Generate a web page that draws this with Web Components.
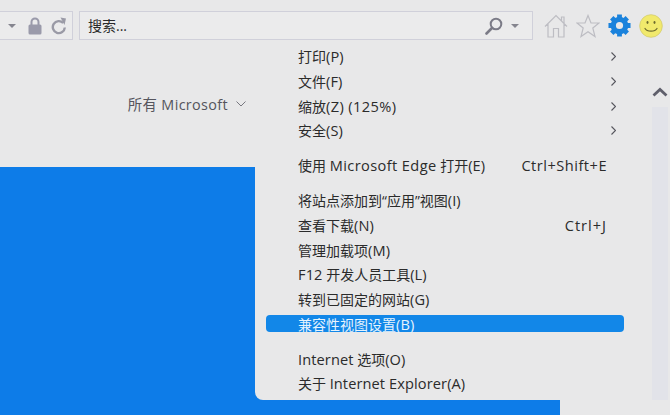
<!DOCTYPE html>
<html lang="zh-CN">
<head>
<meta charset="utf-8">
<title>Internet Explorer</title>
<style>
    html, body {
        margin: 0;
        height: 100%;
        overflow: hidden;
        background: #e8e8e9;
        font-family: "Open Sans", "Noto Sans CJK SC", sans-serif;
        font-size: 14px;
    }
    /* latin runs are a bit bigger than the cjk ones in the menu */
    .l { font-size: 14.6px; letter-spacing: 0.1px; }
    .w { font-size: 14.6px; letter-spacing: 0.4px; }
</style>
</head>
<body>
<ie-window>
    <ie-toolbar></ie-toolbar>
    <ms-page></ms-page>
    <ie-menu>
        <ie-menu-item sub>打印<span class="l">(P)</span></ie-menu-item>
        <ie-menu-item sub>文件<span class="l">(F)</span></ie-menu-item>
        <ie-menu-item sub>缩放<span class="w">(Z) (125%)</span></ie-menu-item>
        <ie-menu-item sub>安全<span class="l">(S)</span></ie-menu-item>
        <ie-menu-item group shortcut="Ctrl+Shift+E" style="--key-gap:.5px">使用 <span class="w">Microsoft Edge</span> 打开<span class="l">(E)</span></ie-menu-item>
        <ie-menu-item group>将站点添加到“应用”视图<span class="l">(I)</span></ie-menu-item>
        <ie-menu-item shortcut="Ctrl+J" style="--key-gap:1px">查看下载<span class="l">(N)</span></ie-menu-item>
        <ie-menu-item>管理加载项<span class="l">(M)</span></ie-menu-item>
        <ie-menu-item><span class="l">F12</span> 开发人员工具<span class="l">(L)</span></ie-menu-item>
        <ie-menu-item>转到已固定的网站<span class="l">(G)</span></ie-menu-item>
        <ie-menu-item active>兼容性视图设置<span class="l">(B)</span></ie-menu-item>
        <ie-menu-item group><span class="l">Internet</span> 选项<span class="l">(O)</span></ie-menu-item>
        <ie-menu-item>关于 <span class="l">Internet Explorer(A)</span></ie-menu-item>
    </ie-menu>
</ie-window>

<script>
class IeWindow extends HTMLElement {
    constructor() {
        super();
        this.attachShadow({ mode: 'open' });
    }

    connectedCallback() {
        this.shadowRoot.innerHTML = `
            <style>
                :host {
                    display: flex;
                    flex-direction: column;
                    position: relative;
                    width: 670px;
                    height: 415px;
                    overflow: hidden;
                    background: #e8e8e9;
                }
            </style>
            <slot></slot>
        `;
    }
}

class IeToolbar extends HTMLElement {
    constructor() {
        super();
        this.attachShadow({ mode: 'open' });
    }

    connectedCallback() {
        this.shadowRoot.innerHTML = `
            <style>
                :host {
                    display: flex;
                    align-items: center;
                    flex: none;
                    height: 29px;
                    padding: 11px 8px 6px 0;
                    gap: 6px;
                }
                .address, .search {
                    display: flex;
                    align-items: center;
                    flex: none;
                    box-sizing: border-box;
                    height: 29px;
                    border: 1px solid #d0d0da;
                    background: #ebebec;
                }
                .address {
                    width: 73px;
                    border-left: 0;
                    gap: 12px;
                    padding-left: 8px;
                }
                .address .reload { margin-left: -3px; }
                .search {
                    width: 454px;
                    padding: 0 13px 0 8px;
                    font-size: 14px;
                    color: #2a2a2a;
                }
                .search span { flex: 1; margin-top: -2px; }
                .search .glass { margin-right: 8px; }
                .caret {
                    width: 0;
                    height: 0;
                    border: 4px solid transparent;
                    border-top: 4px solid #85858f;
                    border-bottom: 0;
                    flex: none;
                }
                .tools {
                    display: flex;
                    align-items: center;
                    margin-left: 5px;
                    gap: 8px;
                }
                svg { display: block; flex: none; }
            </style>
            <div class="address">
                <div class="caret"></div>
                <svg width="14" height="18" viewBox="0 0 14 18">
                    <path d="M3.5 8V5a3.5 3.5 0 0 1 7 0v3" fill="none" stroke="#9a9aaa" stroke-width="2"/>
                    <rect x="0.5" y="7.5" width="13" height="10" rx="1.5" fill="#9a9aaa"/>
                </svg>
                <svg class="reload" width="16" height="18" viewBox="0 0 16 18">
                    <path d="M12.2 6a6 6 0 1 0 1.600 4.500" fill="none" stroke="#9a9aa6" stroke-width="2.400"/>
                    <path d="M9.500 0.500L15 1.500L13.500 8Z" fill="#9a9aa6"/>
                </svg>
            </div>
            <div class="search">
                <span>搜索...</span>
                <svg class="glass" width="18" height="18" viewBox="0 0 18 18">
                    <circle cx="11" cy="7" r="5.300" fill="none" stroke="#7b7b87" stroke-width="2"/>
                    <path d="M7 11L1.500 16.500" stroke="#7b7b87" stroke-width="2.600" stroke-linecap="round"/>
                </svg>
                <div class="caret"></div>
            </div>
            <div class="tools">
                <svg width="24" height="24" viewBox="0 0 24 24">
                    <path d="M1 12.500L12 1.500L23 12.500M4 10V23H9.500V14.500H14.500V23H20V10M17.500 6.500V3H20V9" fill="none" stroke="#bdbdc3" stroke-width="1.200"/>
                </svg>
                <svg width="24" height="24" viewBox="0 0 24 24">
                    <path d="M12 1.500L15 9H23L16.800 14L19 22.500L12 17.700L5 22.500L7.200 14L1 9H9Z" fill="none" stroke="#bdbdc3" stroke-width="1.200"/>
                </svg>
                <svg width="23" height="23" viewBox="0 0 24 24">
                    <circle cx="12" cy="12" r="6.500" fill="none" stroke="#1a82dc" stroke-width="5.500"/>
                    <g stroke="#1a82dc" stroke-width="5">
                        <path d="M12 0.500V5M12 19V23.500M0.500 12H5M19 12H23.500M3.900 3.900L7 7M17 17L20.100 20.100M20.100 3.900L17 7M7 17L3.900 20.100"/>
                    </g>
                </svg>
                <svg width="24" height="24" viewBox="0 0 24 24">
                    <circle cx="12" cy="12" r="11.300" fill="#f1e96c" stroke="#d3cc70" stroke-width="0.800"/>
                    <ellipse cx="8.500" cy="8.500" rx="1" ry="1.400" fill="#6d6a2e"/>
                    <ellipse cx="15.500" cy="8.500" rx="1" ry="1.400" fill="#6d6a2e"/>
                    <path d="M6 14.500C8 18 16 18 18 14.500" fill="none" stroke="#6d6a2e" stroke-width="1.200" stroke-linecap="round"/>
                </svg>
            </div>
        `;
    }
}

class MsPage extends HTMLElement {
    constructor() {
        super();
        this.attachShadow({ mode: 'open' });
    }

    connectedCallback() {
        this.shadowRoot.innerHTML = `
            <style>
                :host {
                    display: grid;
                    grid-template-columns: 560px 1fr;
                    flex: 1;
                    min-height: 0;
                }
                .left {
                    display: flex;
                    flex-direction: column;
                }
                .nav {
                    display: flex;
                    align-items: center;
                    justify-content: flex-end;
                    gap: 8px;
                    height: 121px;
                    flex: none;
                    box-sizing: border-box;
                    padding: 0 314px 6px 0;
                    color: #55555d;
                    font-size: 14.4px;
                    letter-spacing: 0.35px;
                }
                .hero {
                    flex: 1;
                    background: #0d7ce8;
                }
                .bar {
                    width: 16px;
                    height: 313px;
                    margin: 41px 0 0 92px;
                    background: #e2e3e9;
                }
                .up {
                    height: 20px;
                    background: #e8e8e9;
                }
                .up svg { display: block; }
            </style>
            <div class="left">
                <div class="nav">
                    <span>所有 Microsoft</span>
                    <svg width="10" height="6" viewBox="0 0 10 6"><path d="M0.500 0.500L5 5L9.500 0.500" fill="none" stroke="#77777f"/></svg>
                </div>
                <div class="hero"></div>
            </div>
            <div class="bar">
                <div class="up">
                    <svg width="16" height="10" viewBox="0 0 16 10">
                        <path d="M1.500 8.500L8 2.500L14.500 8.500" fill="none" stroke="#5f5f6b" stroke-width="2.800"/>
                    </svg>
                </div>
            </div>
        `;
    }
}

class IeMenu extends HTMLElement {
    constructor() {
        super();
        this.attachShadow({ mode: 'open' });
    }

    connectedCallback() {
        this.shadowRoot.innerHTML = `
            <style>
                :host {
                    display: flex;
                    flex-direction: column;
                    position: absolute;
                    left: 255px;
                    top: 41px;
                    width: 380px;
                    height: 359px;
                    box-sizing: border-box;
                    padding: 3px 11px 0;
                    background: #e8e8e9;
                    border-radius: 0 0 8px 8px;
                }
            </style>
            <slot></slot>
        `;
    }
}

class IeMenuItem extends HTMLElement {
    constructor() {
        super();
        this.attachShadow({ mode: 'open' });
    }

    connectedCallback() {
        const shortcut = this.getAttribute('shortcut');
        this.shadowRoot.innerHTML = `
            <style>
                :host {
                    display: flex;
                    align-items: center;
                    flex: none;
                    height: 24.7px;
                    color: #2b2b2b;
                    font-size: 14px;
                }
                :host([group]) { margin-top: 10.3px; }
                .row {
                    display: flex;
                    align-items: center;
                    justify-content: space-between;
                    flex: 1;
                    height: 17px;
                    padding: 0 17px 0 32px;
                    border-radius: 4px;
                    white-space: nowrap;
                }
                :host([active]) .row {
                    background: #1287e8;
                    color: #e6f3fd;
                }
                .key {
                    font-size: 14.6px;
                    letter-spacing: var(--key-gap, 0);
                }
                .chev { margin: 1px -9px 0 0; }
            </style>
            <div class="row">
                <span><slot></slot></span>
                ${shortcut ? `<span class="key">${shortcut}</span>` : ''}
                ${this.hasAttribute('sub') ? `<svg class="chev" width="5" height="9" viewBox="0 0 5 9"><path d="M0.500 0.500L4.500 4.500L0.500 8.500" fill="none" stroke="#55555d" stroke-width="1.100"/></svg>` : ''}
            </div>
        `;
    }
}

customElements.define('ie-window', IeWindow);
customElements.define('ie-toolbar', IeToolbar);
customElements.define('ms-page', MsPage);
customElements.define('ie-menu', IeMenu);
customElements.define('ie-menu-item', IeMenuItem);
</script>
</body>
</html>
